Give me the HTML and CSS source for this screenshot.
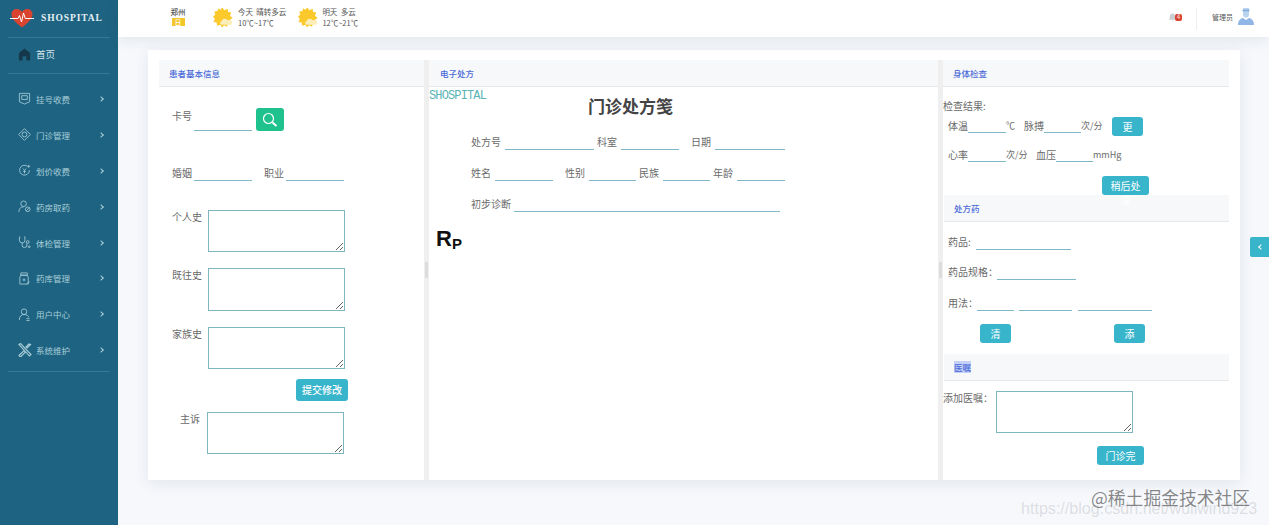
FILE: index.html
```html
<!DOCTYPE html>
<html lang="zh">
<head>
<meta charset="utf-8">
<title>SHOSPITAL</title>
<link rel="stylesheet" href="styles.css">
</head>
<body>
<div class="app">
  <aside class="sidebar">
    <div class="logo">
      <svg class="heart" viewBox="0 0 24 20" width="24" height="20"><path d="M12 19.5C5 14 1.5 10.5 1.5 6.2 1.5 3 4 1 6.7 1 9 1 11 2.2 12 4c1-1.800 3-3 5.300-3C20 1 22.500 3 22.500 6.200c0 4.300-3.500 7.800-10.500 13.300z" fill="#d9432f"/><path d="M0 10.500h8l1.500-3 2 6.500 2-9 1.800 5.500h8.700" fill="none" stroke="#fff" stroke-width="1"/></svg>
      <span class="logo-text">SHOSPITAL</span>
    </div>
    <div class="home">
      <svg class="nav-icon" viewBox="0 0 14 14"><path d="M7 .5 1 5.500V13.500h4V9h4v4.500h4V5.500z" fill="#16384c"/></svg>
      <span>首页</span>
    </div>
    <nav class="nav">
      <div class="nav-item"><svg class="nav-icon" viewBox="0 0 14 14"><path d="M1.500 1.500h11v9L7 13 1.500 10.500z M4 4h6v4H4z"/></svg><span>挂号收费</span><i class="chev"></i></div>
      <div class="nav-item"><svg class="nav-icon" viewBox="0 0 14 14"><path d="M7 .7 13.300 7 7 13.300.7 7z"/><circle cx="7" cy="7" r="2.600"/></svg><span>门诊管理</span><i class="chev"></i></div>
      <div class="nav-item"><svg class="nav-icon" viewBox="0 0 14 14"><path d="M10 2.300a5.300 5.300 0 1 0 2.300 4.500"/><path d="M5.500 5 7 7l1.500-2M7 7v3M5.500 8h3M11.500 1v3M10 2.500h3"/></svg><span>划价收费</span><i class="chev"></i></div>
      <div class="nav-item"><svg class="nav-icon" viewBox="0 0 14 14"><circle cx="6" cy="4" r="3"/><path d="M1 13c0-4 2-5.500 5-5.500"/><circle cx="10.500" cy="10" r="2.500"/><path d="M9 11.500l3-3"/></svg><span>药房取药</span><i class="chev"></i></div>
      <div class="nav-item"><svg class="nav-icon" viewBox="0 0 14 14"><path d="M1.500 1h1M6.500 1h1M1.500 1v3.500a3 3 0 0 0 6 0V1M4.500 7.500V10a2.500 2.500 0 0 0 5 0V8"/><circle cx="10.500" cy="6.500" r="1.500"/><circle cx="12" cy="11.500" r="1"/></svg><span>体检管理</span><i class="chev"></i></div>
      <div class="nav-item"><svg class="nav-icon" viewBox="0 0 14 14"><path d="M3 1h7v2.500H3zM2 5.500 3 3.500h7l1 2V13H2z"/><path d="M5 8.500h3M6.500 7v3M9.500 12.500l3-2"/></svg><span>药库管理</span><i class="chev"></i></div>
      <div class="nav-item"><svg class="nav-icon" viewBox="0 0 14 14"><circle cx="6.500" cy="4" r="3"/><path d="M1.500 13c0-4 2-6 5-6s5 1.500 5 3M9 11.500h3.500M9 13.500h3.500"/></svg><span>用户中心</span><i class="chev"></i></div>
      <div class="nav-item"><svg class="nav-icon wide" viewBox="0 0 14 14"><path d="M1 1.500 2.500.5 13 11.500 11.500 13z M12.500 1.500 9 5 8 4l3-3zM1 12.500l5-5 1.500 1.500-5 5z" stroke-width="1.100"/></svg><span>系统维护</span><i class="chev"></i></div>
    </nav>
  </aside>

  <div class="main">
    <header class="topbar">
      <div class="city">
        <span>郑州</span>
        <span class="city-tag">日</span>
      </div>
      <div class="weather first">
        <svg class="sun" viewBox="0 0 24 22" width="22" height="21"><path d="M10 0l2.500 3 3.500-1.500.5 3.500 3.500.5L18.500 9l3 2.500-3 2 1 3.500-3.500.5-.5 3.500-3.500-1.500L10 22l-2-3-3.500 1-.5-3.500-3.500-.5L2 12.500 0 10l2.500-2L1.500 4.500 5 4l.5-3L8 2.500z" fill="#fbc92b"/><path d="M10 19c-2.500 0-3-3.500-.5-4 .5-3 5-3.500 6-1 3-1 6 .5 5.500 3-.3 1.500-1.500 2-3 2z" fill="#fbeeb9"/></svg>
        <div class="weather-text"><span>今天&nbsp; 晴转多云</span><span class="temp">10℃~17℃</span></div>
      </div>
      <div class="weather second">
        <svg class="sun" viewBox="0 0 24 22" width="22" height="21"><path d="M10 0l2.500 3 3.500-1.500.5 3.500 3.500.5L18.500 9l3 2.500-3 2 1 3.500-3.500.5-.5 3.500-3.500-1.500L10 22l-2-3-3.500 1-.5-3.500-3.500-.5L2 12.500 0 10l2.500-2L1.500 4.500 5 4l.5-3L8 2.500z" fill="#fbc92b"/><path d="M10 19c-2.500 0-3-3.500-.5-4 .5-3 5-3.500 6-1 3-1 6 .5 5.500 3-.3 1.500-1.500 2-3 2z" fill="#fbeeb9"/></svg>
        <div class="weather-text"><span>明天&nbsp; 多云</span><span class="temp">12℃~21℃</span></div>
      </div>
      <div class="top-right">
        <div class="bell">
          <svg viewBox="0 0 10 10" width="9" height="9"><path d="M5 .5C3 .5 2 2 2 4v2L.8 7.500h8.400L8 6V4C8 2 7 .5 5 .5zM4 8.200h2L5 9.500z" fill="#c9ced2"/></svg>
          <span class="badge">4</span>
        </div>
        <span class="divider"></span>
        <span class="user">管理员</span>
        <svg class="avatar" viewBox="0 0 16 18" width="16" height="18"><path d="M5 1h6v6.500a3 3 0 0 1-6 0z" fill="#b9d4ef"/><path d="M4.500 3.500h7" stroke="#7fa9d8" stroke-width="1.500"/><path d="M0 18c0-4 2-6.500 5-7l3 2 3-2c3 .5 5 3 5 7z" fill="#8fb6e6"/></svg>
      </div>
    </header>

    <div class="content">
      <div class="card">
        <section class="col col-a">
          <h2 class="head">患者基本信息</h2>
          <div class="a-body">
            <div class="card-row">
              <span class="lab card-lab">卡号</span>
              <input class="line w58" type="text">
              <button class="search" type="button" aria-label="搜索">
                <svg viewBox="0 0 16 16" width="16" height="16"><circle cx="6.500" cy="6.500" r="5" fill="none" stroke="#fff" stroke-width="1.200"/><path d="M10.500 10.500l4 3.500" stroke="#fff" stroke-width="2"/></svg>
              </button>
            </div>
            <div class="row a-marry">
              <span class="lab w22">婚姻</span><input class="line w58" type="text">
              <span class="lab ml12 w22">职业</span><input class="line w58" type="text">
            </div>
            <div class="area-row a-r1"><span class="lab w36">个人史</span><textarea></textarea></div>
            <div class="area-row a-r2"><span class="lab w36">既往史</span><textarea class="tall"></textarea></div>
            <div class="area-row a-r2"><span class="lab w36">家族史</span><textarea></textarea></div>
            <button class="btn submit" type="button">提交修改</button>
            <div class="area-row a-r3"><span class="lab w28 right">主诉</span><textarea></textarea></div>
          </div>
        </section>
        <div class="gutter"></div>
        <section class="col col-b">
          <h2 class="head flush">电子处方</h2>
          <div class="brand">SHOSPITAL</div>
          <h1 class="title">门诊处方笺</h1>
          <div class="b-body">
            <div class="row b-r1">
              <span class="lab">处方号</span><input class="line ml4 w89" type="text">
              <span class="lab ml3">科室</span><input class="line ml4 w58" type="text">
              <span class="lab ml12">日期</span><input class="line ml4 w70" type="text">
            </div>
            <div class="row b-r2">
              <span class="lab">姓名</span><input class="line ml4 w58" type="text">
              <span class="lab ml12">性别</span><input class="line ml4 w47" type="text">
              <span class="lab ml3">民族</span><input class="line ml4 w47" type="text">
              <span class="lab ml3">年龄</span><input class="line ml4 w48" type="text">
            </div>
            <div class="row b-r2">
              <span class="lab">初步诊断</span><input class="line ml3 w266" type="text">
            </div>
          </div>
          <div class="rp"><span class="rp-r">R</span><span class="rp-p">P</span></div>
        </section>
        <div class="gutter"></div>
        <section class="col col-c">
          <h2 class="head">身体检查</h2>
          <div class="lab c-result">检查结果:</div>
          <div class="row c-r1">
            <span class="lab">体温</span><input class="line w38" type="text"><span class="lab small w8">℃</span>
            <span class="lab ml10">脉搏</span><input class="line w37" type="text"><span class="lab small w20">次/分</span>
            <button class="btn tiny ml11" type="button">更新</button>
          </div>
          <div class="row c-r2">
            <span class="lab">心率</span><input class="line w38" type="text"><span class="lab small w20">次/分</span>
            <span class="lab ml10">血压</span><input class="line w37" type="text"><span class="lab small">mmHg</span>
          </div>
          <button class="btn mid later" type="button">稍后处理</button>
          <h2 class="head sub">处方药</h2>
          <div class="row c-r3"><span class="lab">药品:</span><input class="line ml5 w95" type="text"></div>
          <div class="row c-r4"><span class="lab w45">药品规格：</span><input class="line ml4 w79" type="text"></div>
          <div class="row c-r5">
            <span class="lab w27">用法：</span><input class="line ml2 w37" type="text">
            <input class="line ml5 w53" type="text"><input class="line ml6 w74" type="text">
          </div>
          <div class="c-actions">
            <button class="btn tiny" type="button">清空</button>
            <button class="btn tiny add" type="button">添加</button>
          </div>
          <h2 class="head sub advice"><mark>医嘱</mark></h2>
          <div class="area-row c-area"><span class="lab w53">添加医嘱：</span><textarea></textarea></div>
          <button class="btn mid finish" type="button">门诊完成</button>
        </section>
      </div>
    </div>
  </div>
</div>
<div class="side-tab"><i></i></div>
<div class="mark-url">https://blog.csdn.net/wuliwind923</div>
<div class="mark-cn">@稀土掘金技术社区</div>
</body>
</html>
```
FILE: styles.css
```css
* { box-sizing: border-box; }
html, body { margin: 0; height: 525px; overflow: hidden; }
body {
  font-family: "Noto Sans CJK SC", "Liberation Sans", sans-serif;
  color: #666;
  background: #f6f8fc;
  position: relative;
}
h1, h2 { margin: 0; }
.app { display: flex; height: 525px; }

/* sidebar */
.sidebar { width: 118px; flex: none; background: #1e6482; color: #a8cdd8; font-size: 8.5px; }
.logo { height: 38px; margin: 0 8px; display: flex; align-items: center; border-bottom: 1px solid #35799a; }
.heart { margin: -2px 0 0 2px; }
.logo-text { margin-left: 7px; margin-top: -1px; color: #e6f0f4; font-family: "Liberation Serif", serif; font-weight: 700; font-size: 9.500px; letter-spacing: .9px; }
.home { height: 36px; margin: 0 8px; padding: 0 0 3px 10px; display: flex; align-items: center; border-bottom: 1px solid #35799a; color: #d5e6ec; font-size: 9.500px; }
.nav { margin: 7px 8px 0; padding-bottom: 3px; border-bottom: 1px solid #35799a; }
.nav-item { height: 35.900px; padding-left: 10px; display: flex; align-items: center; }
.nav-icon { width: 13px; height: 13px; margin-right: 5px; fill: none; stroke: #a8cdd8; stroke-width: .9; flex: none; }
.home .nav-icon { stroke: none; }
.nav-icon.wide { width: 14px; height: 14px; margin-right: 4px; }
.chev { width: 4px; height: 4px; margin-left: auto; margin-right: 7px; border-top: 1.200px solid #a8cdd8; border-right: 1.200px solid #a8cdd8; transform: rotate(45deg); }

/* top bar */
.main { flex: 1; min-width: 0; display: flex; flex-direction: column; }
.topbar { height: 37px; background: #fff; display: flex; align-items: center; padding-left: 52px; box-shadow: 0 2px 14px rgba(60, 70, 80, .12); position: relative; font-size: 7.500px; color: #555; }
.city { width: 16px; display: flex; flex-direction: column; align-items: center; line-height: 9px; font-size: 7.500px; font-weight: 500; margin-top: -5px; }
.city-tag { width: 13px; height: 8px; margin-top: 2px; background: #f3c62c; color: #fff; line-height: 8px; text-align: center; font-size: 6.500px; }
.weather { display: flex; align-items: center; }
.weather.first { margin-left: 27px; }
.weather.second { margin-left: 12px; }
.sun { margin-top: -2px; }
.weather-text { margin: -4px 0 0 2px; display: flex; flex-direction: column; line-height: 11px; white-space: nowrap; }
.first .weather-text { margin-left: 3px; }
.temp { font-size: 7.500px; }
.top-right { margin-left: auto; display: flex; align-items: center; }
.bell { display: flex; align-items: center; width: 15px; margin-right: 13px; margin-top: -2px; }
.badge { width: 7px; height: 7px; margin-left: -2px; background: #d8432f; color: #fff; border-radius: 2px; font-size: 5.500px; line-height: 7px; text-align: center; }
.divider { width: 1px; height: 22px; background: #eee; margin-right: 15px; }
.user { font-size: 7px; width: 25px; white-space: nowrap; margin-top: -3px; }
.avatar { margin: -6px 15px 0 1px; }

/* card */
.content { flex: 1; padding: 13px 29px 0 30px; }
.card { height: 430px; padding-top: 10px; background: #fff; display: flex; box-shadow: 0 3px 14px rgba(60, 70, 90, .10); }
.col { height: 420px; }
.col-a { width: 276px; padding-left: 11px; }
.col-b { width: 509px; }
.col-c { width: 297px; padding-right: 11px; }
.gutter { width: 5px; background: #efefef; display: flex; align-items: center; justify-content: center; }
.gutter::after { content: ""; width: 3px; height: 16px; background: #dcdcdc; }
.head { height: 27px; padding-left: 10px; background: #f7f8fa; border-bottom: 1px solid #e6e8ea; color: #4a6bd8; font-size: 8.500px; font-weight: 500; line-height: 27px; }
.head.flush { padding-left: 11px; }
.head.sub { margin-left: 1px; line-height: 26px; }
mark { background: #c4d0f6; color: #4a6bd8; }

/* form atoms */
.row { display: flex; align-items: flex-start; height: 15px; white-space: nowrap; }
.lab { font-size: 10px; line-height: 14px; color: #6a6a6a; flex: none; white-space: nowrap; }
.lab.small { font-size: 9px; }
.line { height: 15px; padding: 0; border: 0; border-bottom: 1px solid #7fb6c8; background: none; outline: none; flex: none; border-radius: 0; }
textarea { width: 137px; height: 42px; border: 1px solid #7fb5bf; padding: 2px; margin: 0; outline: none; flex: none; display: block; background: #fff; }
textarea.tall { height: 43px; }
.area-row { display: flex; align-items: flex-start; }
.btn { display: block; padding: 3px 0 0; border: 0; border-radius: 3px; background: #38b5cb; color: #fff; font-family: inherit; font-size: 10px; line-height: 14px; text-align: center; white-space: normal; flex: none; cursor: pointer; }
.btn.tiny { width: 31px; height: 19px; padding: 3px 8px 0; }
.btn.mid { width: 47px; height: 19px; padding: 3px 8px 0; }

.w8 { width: 8px; } .w20 { width: 20px; } .w22 { width: 22px; } .w27 { width: 27px; } .w28 { width: 28px; } .w36 { width: 36px; }
.w37 { width: 37px; } .w38 { width: 38px; } .w45 { width: 45px; } .w47 { width: 47px; } .w48 { width: 48px; } .w53 { width: 53px; }
.w58 { width: 58px; } .w70 { width: 70px; } .w74 { width: 74px; } .w79 { width: 79px; } .w89 { width: 89px; }
.w95 { width: 95px; } .w266 { width: 266px; }
.ml2 { margin-left: 2px; } .ml3 { margin-left: 3px; } .ml4 { margin-left: 4px; } .ml5 { margin-left: 5px; }
.ml6 { margin-left: 6px; } .ml10 { margin-left: 10px; } .ml11 { margin-left: 11px; } .ml12 { margin-left: 12px; }
.right { text-align: right; margin-right: 7px; }

/* patient column */
.a-body { padding-left: 13px; }
.card-row { display: flex; align-items: flex-start; margin-top: 21px; height: 23px; }
.card-lab { width: 22px; margin-top: 1px; }
.card-row .line { height: 23px; }
.search { width: 28px; height: 23px; margin-left: 4px; padding: 0; border: 0; border-radius: 3px; background: #1fc18d; display: flex; align-items: center; justify-content: center; }
.a-marry { margin-top: 35px; }
.a-r1 { margin-top: 29px; }
.a-r2 { margin-top: 16px; }
.a-r3 { margin-top: 11px; }
.submit { width: 52px; height: 22px; margin: 10px 0 0 124px; padding: 0; font-weight: 500; }

/* prescription column */
.brand { height: 14px; margin-top: 2px; font-family: "Liberation Mono", monospace; font-size: 12px; letter-spacing: -.87px; line-height: 14px; color: #58b5b5; white-space: nowrap; }
.title { height: 24px; margin-top: -9px; padding-right: 106px; font-size: 17px; line-height: 24px; font-weight: 700; color: #444; text-align: center; }
.b-body { padding-left: 42px; }
.b-r1 { margin-top: 17px; }
.b-r2 { margin-top: 16px; }
.rp { margin: 15px 0 0 7px; height: 24px; line-height: 24px; color: #111; font-family: "Liberation Sans", sans-serif; font-weight: 700; white-space: nowrap; }
.rp-r { font-size: 22px; }
.rp-p { font-size: 15px; position: relative; top: 3px; }

/* exam column */
.c-result { margin-top: 12px; }
.c-r1, .c-r2, .c-r3, .c-r4, .c-r5 { padding-left: 5px; }
.c-r1 { margin-top: 5px; }
.c-r1 .lab, .c-r2 .lab { margin-top: 1px; }
.c-r1 .btn { margin-top: -1px; }
.c-r2 { margin-top: 14px; }
.later { margin: 14px 0 0 159px; }
.c-r3 { margin-top: 13px; }
.c-r4 { margin-top: 15px; }
.c-r5 { margin-top: 16px; }
.c-actions { display: flex; margin: 13px 0 0 37px; }
.add { margin-left: 103px; }
.advice { margin-top: 11px; }
.c-area { margin-top: 10px; }
.finish { margin: 13px 0 0 154px; }

/* overlays */
.side-tab { position: absolute; left: 1250px; top: 237px; width: 19px; height: 20px; background: #38b5cb; border-radius: 2px 0 0 2px; display: flex; align-items: center; justify-content: center; }
.side-tab i { width: 4px; height: 4px; margin-left: 2px; border-left: 1.500px solid #fff; border-bottom: 1.500px solid #fff; transform: rotate(45deg); }
.mark-url { position: absolute; left: 1021px; top: 498px; font-family: "Liberation Sans", sans-serif; font-size: 16.100px; line-height: 20px; color: rgba(120, 125, 130, .22); white-space: nowrap; }
.mark-cn { position: absolute; left: 1091px; top: 485px; font-size: 17.800px; line-height: 25px; color: rgba(90, 90, 90, .72); white-space: nowrap; }
```
